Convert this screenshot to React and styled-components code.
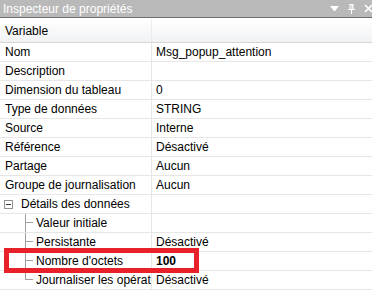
import React from 'react';
import styled, { createGlobalStyle } from 'styled-components';

const GlobalStyle = createGlobalStyle`
  html, body {
    margin: 0;
    padding: 0;
    background: #ffffff;
  }
  body {
    font-family: "Liberation Sans", Arial, sans-serif;
    font-size: 12px;
    color: #000;
  }
`;

// Styled Components
const Panel = styled.div`
  position: relative;
  width: 372px;
  height: 299px;
  overflow: hidden;
  background: #fff;
`;

const TitleBar = styled.div`
  display: flex;
  align-items: center;
  justify-content: space-between;
  height: 17px;
  padding-left: 3px;
  background: #b9b9b9;
  border-bottom: 1px solid #6f6f6f;
  color: #fff;
  font-size: 12px;
  white-space: nowrap;
`;

const TitleTools = styled.div`
  display: flex;
  align-items: center;
  gap: 9px;
  margin-right: -1px;
  height: 100%;
`;

const Header = styled.div`
  display: grid;
  grid-template-columns: 152px 1fr;
  height: 23px;
  margin-top: 1px;
  border-bottom: 1px solid #d6d6d6;
  background: linear-gradient(#ffffff, #f1f2f4);
`;

const HeaderCell = styled.div`
  display: flex;
  align-items: center;
  padding-left: 5px;
  border-right: ${p => (p.$last ? 'none' : '1px solid #ececec')};
`;

const Row = styled.div`
  display: grid;
  grid-template-columns: 152px 1fr;
  height: 18px;
  border-bottom: 1px solid #e6e6e6;
`;

const LabelCell = styled.div`
  display: flex;
  align-items: center;
  position: relative;
  padding-left: ${p => p.$indent}px;
  border-right: 1px solid #e6e6e6;
  white-space: nowrap;
  overflow: hidden;
`;

const ValueCell = styled.div`
  display: flex;
  align-items: center;
  padding-left: 4px;
  font-weight: ${p => (p.$bold ? 700 : 400)};
  white-space: nowrap;
  overflow: hidden;
`;

const ExpandBox = styled.span`
  position: relative;
  box-sizing: border-box;
  width: 9px;
  height: 9px;
  margin: 0 8px 0 -1px;
  border: 1px solid #919191;
  background: #fff;
  flex: none;

  &::after {
    content: '';
    position: absolute;
    left: 1px;
    right: 1px;
    top: 3px;
    height: 1px;
    background: #333;
  }
`;

const TreeLine = styled.span`
  position: absolute;
  left: 25px;
  top: -1px;
  width: 8px;
  height: ${p => (p.$last ? '10px' : '20px')};
  border-left: 1px solid #a0a0a0;

  &::after {
    content: '';
    position: absolute;
    left: 0;
    top: 9px;
    width: 7px;
    border-top: 1px solid #a0a0a0;
  }
`;

const Highlight = styled.div`
  position: absolute;
  left: 4px;
  top: 248px;
  width: 195px;
  height: 25px;
  box-sizing: border-box;
  border: 5px solid #e8202a;
  pointer-events: none;
`;
// End of Styled Components

const rows = [
  { label: 'Nom', value: 'Msg_popup_attention' },
  { label: 'Description', value: '' },
  { label: 'Dimension du tableau', value: '0' },
  { label: 'Type de données', value: 'STRING' },
  { label: 'Source', value: 'Interne' },
  { label: 'Référence', value: 'Désactivé' },
  { label: 'Partage', value: 'Aucun' },
  { label: 'Groupe de journalisation', value: 'Aucun' },
  { label: 'Détails des données', value: '', group: true },
  { label: 'Valeur initiale', value: '', child: true },
  { label: 'Persistante', value: 'Désactivé', child: true },
  { label: "Nombre d'octets", value: '100', child: true, bold: true },
  { label: 'Journaliser les opérations', value: 'Désactivé', child: true, last: true },
];

const TitleIcons = () => (
  <TitleTools>
    <svg width="9" height="6" viewBox="0 0 9 6">
      <path d="M0 0h9L4.5 5.5z" fill="#fff" />
    </svg>
    <svg width="7" height="10" viewBox="0 0 7 10">
      <path d="M1.5 0.5h4M2 0.5v5M5 0.5v5M0 5.5h7M3.5 5.5v4.5" stroke="#fff" strokeWidth="1" fill="none" />
      <path d="M4 0.5v5" stroke="#fff" strokeWidth="1" />
    </svg>
    <svg width="9" height="9" viewBox="0 0 9 9">
      <path d="M1 1l7 7M8 1l-7 7" stroke="#fff" strokeWidth="1.6" />
    </svg>
  </TitleTools>
);

export default function App() {
  return (
    <>
      <GlobalStyle />
      <Panel>
        <TitleBar>
          <span>Inspecteur de propriétés</span>
          <TitleIcons />
        </TitleBar>
        <Header>
          <HeaderCell>Variable</HeaderCell>
          <HeaderCell $last />
        </Header>
        {rows.map(row => (
          <Row key={row.label}>
            <LabelCell $indent={row.child ? 36 : 5}>
              {row.group && <ExpandBox />}
              {row.child && <TreeLine $last={row.last} />}
              {row.label}
            </LabelCell>
            <ValueCell $bold={row.bold}>{row.value}</ValueCell>
          </Row>
        ))}
        <Highlight />
      </Panel>
    </>
  );
}
